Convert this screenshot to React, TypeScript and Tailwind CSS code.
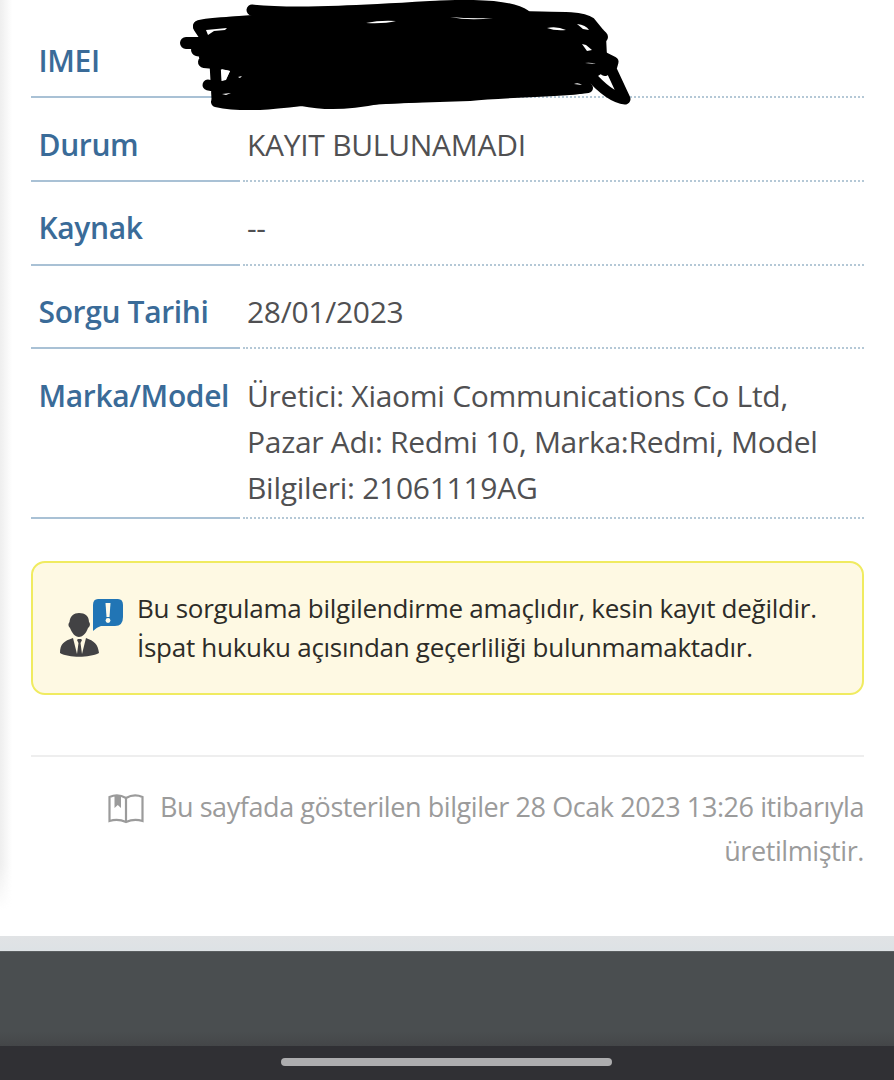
import type { ReactNode } from "react";

const FONT = "font-['Open_Sans','Noto_Sans',sans-serif]";

type RowProps = {
  label: string;
  className: string;
  children?: ReactNode;
};

function Row({ label, className, children }: RowProps) {
  return (
    <div className={`flex gap-[3px] ${className}`}>
      <div className="w-[209px] shrink-0 whitespace-nowrap border-b-2 border-[#a9c1d5] pl-[7.5px] pt-[23px] text-[30px] font-semibold leading-[46px] tracking-[-0.36px] text-[#3a6b98]">
        {label}
      </div>
      <div className="flex-1 whitespace-nowrap border-b-2 border-dotted border-[#b4c8d6] pl-[4px] pt-[23px] text-[30px] leading-[46px] tracking-[-0.28px] text-[#505052]">
        {children}
      </div>
    </div>
  );
}

// Hand-drawn marker strokes that hide the IMEI number
function Scribble() {
  return (
    <svg
      className="absolute left-0 top-0 h-[120px] w-[660px]"
      viewBox="0 0 660 120"
      fill="none"
      stroke="#000"
      strokeLinecap="round"
      strokeLinejoin="round"
    >
      <path
        d="M226 17 L252 15 L510 5 L529 13 L585 17 L596 32 L605 55 L604 72 L592 80 L588 92 L580 94 L520 97 L440 101 L350 106 L300 106 L240 107 L220 98 L220 82 L226 80 L230 71 L211 67 L199 58 L200 48 L208 33 Z"
        fill="#000"
        stroke="none"
      />
      <path d="M252 10 C300 15 390 9 440 6 C485 4 514 7 525 15" strokeWidth="11" />
      <path d="M199 26 C217 22 236 23 258 22" strokeWidth="12" />
      <path d="M199 27 L209 42 L222 50" strokeWidth="12" />
      <path d="M186 43 H215 M197 50 L218 54 M204 62 L226 64" strokeWidth="12" />
      <path d="M214 36 L234 35 M215 63 L217 99 M208 85 C220 88 228 86 239 83" strokeWidth="11" />
      <path d="M216 102 C244 108 277 104 302 101 C326 106 354 104 378 99 L470 96 C513 92 560 92 588 88" strokeWidth="10" />
      <path d="M522 17 C547 18 580 16 590 23 L599 34 L602 37 M600 36 L601 57 L605 70" strokeWidth="12" />
      <path d="M595 53 L613 62 L611 69 L625 99 C611 98 596 82 589 74" strokeWidth="11" />
      <path d="M206 30 L227 28 L225 30 L214 31 L208 35 Z M221.500 69 L230 71 L226 79 L222 80 Z M238 77 L242 76 L240 78 Z M222 94 L231 93 L226 95 Z" fill="#fff" stroke="none" />
      <path d="M366 23 Q380 20 396 21 Q384 24 366 23 M450 17 Q470 19 493 18 Q470 21 450 17 M547 28 Q557 26 566 30 Q555 31 547 28 M577 24 Q586 25 589 30 L583 29 Z M582 44 L586 45 L592 50 L587 51 Z M585 63 Q590 62 596 64 Z M574 84 Q578 82 582 85 Z" fill="#fff" stroke="none" />
    </svg>
  );
}

function AdvisorIcon() {
  return (
    <svg className="h-[60px] w-[64px] shrink-0" viewBox="0 0 64 60">
      <path d="M38 1 H58 Q63 1 63 7 V19 Q63 28 55 28 H41 Q37 29 33 33 V7 Q33 1 38 1Z" fill="#2175b5" />
      <path d="M45.5 5 H50.5 L49.5 19 H46.5Z" fill="#fffbea" />
      <circle cx="48" cy="22.500" r="2.4" fill="#fffbea" />
      <path d="M9.5 24 C10 18 14 15 19 15 C25 15 29 18 29 24 C31 26 29.500 29 28 30 C26 36 22 39 19 39 C15 39 12 35 10 30 C8 28 8 26 9.500 24Z" fill="#424244" />
      <path d="M0 55 C0 46 4 43 13 40 L17 56 L18.500 45 L17 42 L18 41 H21 L22 42 L20.500 45 L22 56 L26 40 C34 43 38 46 39 55 C29 60 9 60 0 55Z" fill="#424244" />
    </svg>
  );
}

function BookIcon() {
  return (
    <svg className="mt-[8.5px] h-[30px] w-[36px] shrink-0" viewBox="0 0 36 30" fill="none" stroke="#9b9b9b" strokeWidth="2.2">
      <path d="M18 4 Q10 -.5 1.500 3 V27 Q10 24.500 18 28 Q26 24.500 34.500 27 V3 Q26 -.5 18 4Z M18 4 V28" />
      <path d="M6.500 2 H13 V14 L9.800 11 L6.500 14Z" fill="#9b9b9b" stroke="none" />
    </svg>
  );
}

export default function App() {
  return (
    <div className={`${FONT} relative flex h-[1080px] w-[894px] flex-col overflow-hidden bg-white`}>
      <main className="h-[936px] shrink-0 pl-[31px] pr-[30px]">
        <Row label="IMEI" className="h-[98px] pt-[15px]" />
        <Row label="Durum" className="h-[84px] pt-px">KAYIT BULUNAMADI</Row>
        <Row label="Kaynak" className="h-[84px]">--</Row>
        <Row label="Sorgu Tarihi" className="h-[83px]">28/01/2023</Row>
        <Row label="Marka/Model" className="h-[170px] pt-px">
          Üretici: Xiaomi Communications Co Ltd,
          <br />
          Pazar Adı: Redmi 10, Marka:Redmi, Model
          <br />
          Bilgileri: 21061119AG
        </Row>

        {/* Notice */}
        <div className="mt-[42px] flex h-[134px] items-center rounded-[14px] border-2 border-[#f0eb60] bg-[#fef9e3] pl-[27px]">
          <AdvisorIcon />
          <p className="ml-[13px] whitespace-nowrap text-[26px] leading-[39px] tracking-[-0.28px] text-[#2d2c28]">
            Bu sorgulama bilgilendirme amaçlıdır, kesin kayıt değildir.
            <br />
            İspat hukuku açısından geçerliliği bulunmamaktadır.
          </p>
        </div>

        {/* Timestamp */}
        <div className="mt-[60px] flex justify-end border-t-2 border-[#eeeeee] pt-[28px] text-[#9b9b9b]">
          <BookIcon />
          <p className="ml-[16px] whitespace-nowrap text-right text-[27px] leading-[44px] tracking-[-0.42px]">
            Bu sayfada gösterilen bilgiler 28 Ocak 2023 13:26 itibarıyla
            <br />
            üretilmiştir.
          </p>
        </div>
      </main>

      <div className="h-[15px] shrink-0 bg-gradient-to-b from-[#e1e3e5] to-[#dde2e5]" />
      <div className="h-[95px] shrink-0 border-t border-[#5a5e60] bg-[linear-gradient(#4a4e50_85%,#444648)]" />
      <div className="flex h-[34px] shrink-0 justify-center bg-[#303034] pt-[12px]">
        <div className="-ml-px h-[8px] w-[331px] rounded-full bg-[#adadaf]" />
      </div>

      {/* Left edge shadow, fading out at the bottom */}
      <div className="absolute left-0 top-0 h-[910px] w-[12px] bg-gradient-to-r from-[#eeeeee] to-transparent [mask-image:linear-gradient(#000_95%,transparent)]" />
      <Scribble />
    </div>
  );
}
